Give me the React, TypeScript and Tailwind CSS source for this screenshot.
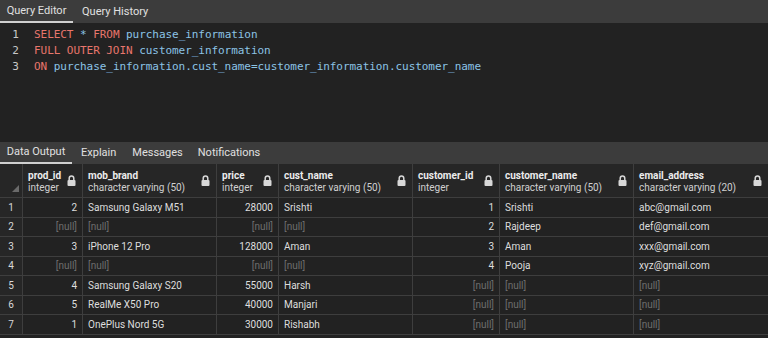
import React from "react";

const Lock = () => (
  <svg width="9" height="11" viewBox="0 0 9 11" className="shrink-0">
    <path d="M2.2 5V3.4a2.3 2.3 0 0 1 4.6 0V5" fill="none" stroke="#d8d8d8" strokeWidth="1.5" />
    <rect x="0.5" y="5" width="8" height="6" rx="1" fill="#d8d8d8" />
  </svg>
);

const cols = [
  { name: "prod_id", type: "integer", w: "w-[60px]", right: true },
  { name: "mob_brand", type: "character varying (50)", w: "w-[134px]", right: false },
  { name: "price", type: "integer", w: "w-[62px]", right: true },
  { name: "cust_name", type: "character varying (50)", w: "w-[134px]", right: false },
  { name: "customer_id", type: "integer", w: "w-[87px]", right: true },
  { name: "customer_name", type: "character varying (50)", w: "w-[134px]", right: false },
  { name: "email_address", type: "character varying (20)", w: "w-[134px]", right: false },
];

const N = null;
const rows: (string | null)[][] = [
  ["2", "Samsung Galaxy M51", "28000", "Srishti", "1", "Srishti", "abc@gmail.com"],
  [N, N, N, N, "2", "Rajdeep", "def@gmail.com"],
  ["3", "iPhone 12 Pro", "128000", "Aman", "3", "Aman", "xxx@gmail.com"],
  [N, N, N, N, "4", "Pooja", "xyz@gmail.com"],
  ["4", "Samsung Galaxy S20", "55000", "Harsh", N, N, N],
  ["5", "RealMe X50 Pro", "40000", "Manjari", N, N, N],
  ["1", "OnePlus Nord 5G", "30000", "Rishabh", N, N, N],
];

const K = ({ children }: { children: React.ReactNode }) => (
  <span className="text-[#e8766c]">{children}</span>
);
const I = ({ children }: { children: React.ReactNode }) => (
  <span className="text-[#8cc4e6]">{children}</span>
);

export default function App() {
  return (
    <div
      className="w-[768px] h-[338px] overflow-hidden bg-[#222222] flex flex-col"
      style={{ fontFamily: "Roboto, 'Liberation Sans', sans-serif" }}
    >
      {/* top tabs */}
      <div className="h-[23px] bg-[#3c3c3c] flex items-stretch text-[11px] text-[#e0e0e0] shrink-0">
        <div className="w-[73px] flex items-center justify-center border-b-2 border-[#d0d0d0] pt-[1px]">
          Query Editor
        </div>
        <div className="pl-[9px] flex items-center pt-[1px]">Query History</div>
      </div>
      {/* editor */}
      <div
        className="h-[119px] bg-[#222222] flex shrink-0 pt-[4px] text-[11px] leading-[16px]"
        style={{ fontFamily: "'DejaVu Sans Mono', monospace" }}
      >
        <div className="w-[31px] flex flex-col items-center text-[#c8c8c8]">
          <div>1</div>
          <div>2</div>
          <div>3</div>
        </div>
        <div className="pl-[3px] flex flex-col text-[#cfcfcf] whitespace-pre tracking-[-0.05px]">
          <div>
            <K>SELECT</K> <span className="text-[#8cc4e6]">*</span> <K>FROM</K> <I>purchase_information</I>
          </div>
          <div>
            <K>FULL OUTER JOIN</K> <I>customer_information</I>
          </div>
          <div>
            <K>ON</K> <I>purchase_information.cust_name=customer_information.customer_name</I>
          </div>
        </div>
      </div>
      {/* output tabs */}
      <div className="h-[22px] bg-[#3c3c3c] flex items-stretch text-[11px] text-[#e0e0e0] shrink-0">
        <div className="w-[72px] flex items-center justify-center border-b-2 border-[#d0d0d0] pt-[1px]">
          Data Output
        </div>
        <div className="pl-[9px] flex items-center pt-[1px]">Explain</div>
        <div className="pl-[16px] flex items-center pt-[1px]">Messages</div>
        <div className="pl-[15px] flex items-center pt-[1px]">Notifications</div>
      </div>
      {/* grid */}
      <div className="flex flex-col text-[10px]">
        <div className="h-[34px] flex bg-[#262626] border-b border-[#3e3e3e]">
          <div className="w-[23px] border-r border-[#3e3e3e] relative">
            <svg width="7" height="7" viewBox="0 0 7 7" className="absolute right-[3px] bottom-[5px]">
              <polygon points="7,0 7,7 0,7" fill="#6a6a6a" />
            </svg>
          </div>
          {cols.map((c) => (
            <div
              key={c.name}
              className={`${c.w} border-r border-[#3e3e3e] last:border-r-0 flex items-center justify-between pl-[5px] pr-[6px]`}
            >
              <div className="flex flex-col leading-[12px] pt-[2px]">
                <span className="font-bold text-[#ececec]">{c.name}</span>
                <span className="text-[#d0d0d0]">{c.type}</span>
              </div>
              <Lock />
            </div>
          ))}
        </div>
        {rows.map((r, i) => (
          <div key={i} className="h-[19.5px] flex bg-[#222222] border-b border-[#3e3e3e]">
            <div className="w-[23px] border-r border-[#3e3e3e] flex items-center justify-center text-[#d8d8d8] bg-[#262626]">
              {i + 1}
            </div>
            {r.map((v, j) => {
              const c = cols[j];
              return (
                <div
                  key={j}
                  className={`${c.w} border-r border-[#3e3e3e] last:border-r-0 flex items-center px-[5px] ${
                    c.right ? "justify-end" : "justify-start"
                  } ${v === null ? "text-[#6e6e6e]" : "text-[#dedede]"}`}
                >
                  {v === null ? "[null]" : v}
                </div>
              );
            })}
          </div>
        ))}
      </div>
    </div>
  );
}
